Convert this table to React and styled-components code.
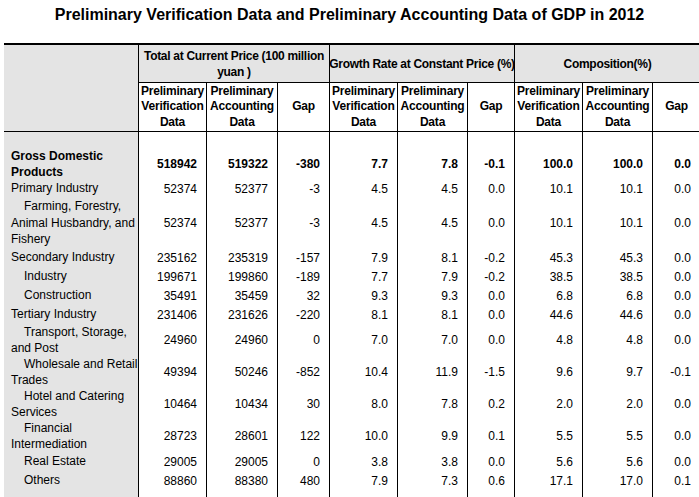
import React from 'react'
import styled, { createGlobalStyle } from 'styled-components'

const GlobalStyle = createGlobalStyle`
  html, body {
    margin: 0;
    padding: 0;
    background: #fff;
    overflow: hidden;
  }
  body {
    font-family: "Liberation Sans", Arial, sans-serif;
    color: #000;
  }
`

const Page = styled.div`
  width: 699px;
  height: 497px;
  overflow: hidden;
`

const Title = styled.h1`
  margin: 0;
  height: 43px;
  box-sizing: border-box;
  padding-top: 5px;
  font-size: 16px;
  line-height: 20px;
  font-weight: bold;
  text-align: center;
`

const Table = styled.div`
  margin-left: 4px;
  width: 696px;
  display: grid;
  grid-template-columns: 134px 68px 71px 52px 68px 70px 47px 68px 70px 48px;
  border-top: 2px solid #000;
  font-size: 12px;
`

const Corner = styled.div`
  grid-row: span 2;
  background: #e4e4e4;
  border-bottom: 1px solid #000;
`

const GroupHead = styled.div`
  grid-column: span 3;
  height: 38px;
  box-sizing: border-box;
  display: flex;
  align-items: center;
  justify-content: center;
  text-align: center;
  background: #e4e4e4;
  border-left: 1px solid #000;
  border-bottom: 1px solid #000;
  font-weight: bold;
  line-height: 16px;
  letter-spacing: -0.3px;
  white-space: nowrap;
`

const SubHead = styled.div`
  height: 49px;
  box-sizing: border-box;
  display: flex;
  align-items: center;
  justify-content: center;
  text-align: center;
  border-left: 1px solid #000;
  border-bottom: 1px solid #000;
  font-weight: bold;
  line-height: 15.5px;
  letter-spacing: -0.2px;
  white-space: nowrap;
`

const Label = styled.div`
  height: ${p => p.$h}px;
  box-sizing: border-box;
  display: flex;
  flex-direction: column;
  justify-content: center;
  padding-left: 7px;
  background: #e4e4e4;
  line-height: 16.5px;
  white-space: nowrap;
  font-weight: ${p => (p.$bold ? 'bold' : 'normal')};
`

const LabelLine = styled.span`
  padding-left: ${p => (p.$indent ? 13 : 0)}px;
`

const Num = styled.div`
  height: ${p => p.$h}px;
  box-sizing: border-box;
  display: flex;
  align-items: center;
  justify-content: flex-end;
  padding-right: 9px;
  border-left: 1px solid #000;
  font-weight: ${p => (p.$bold ? 'bold' : 'normal')};
`

const sub = [
  ['Preliminary', 'Verification', 'Data'],
  ['Preliminary', 'Accounting', 'Data'],
  ['Gap'],
]

const rows = [
  { label: [], h: 17, v: Array(9).fill('') },
  { label: ['Gross Domestic', 'Products'], bold: true, h: 30, v: ['518942', '519322', '-380', '7.7', '7.8', '-0.1', '100.0', '100.0', '0.0'] },
  { label: ['Primary Industry'], h: 19, v: ['52374', '52377', '-3', '4.5', '4.5', '0.0', '10.1', '10.1', '0.0'] },
  { label: ['Farming, Forestry,', 'Animal Husbandry, and', 'Fishery'], indent: true, h: 50, v: ['52374', '52377', '-3', '4.5', '4.5', '0.0', '10.1', '10.1', '0.0'] },
  { label: ['Secondary Industry'], h: 19, v: ['235162', '235319', '-157', '7.9', '8.1', '-0.2', '45.3', '45.3', '0.0'] },
  { label: ['Industry'], indent: true, h: 19, v: ['199671', '199860', '-189', '7.7', '7.9', '-0.2', '38.5', '38.5', '0.0'] },
  { label: ['Construction'], indent: true, h: 19, v: ['35491', '35459', '32', '9.3', '9.3', '0.0', '6.8', '6.8', '0.0'] },
  { label: ['Tertiary Industry'], h: 19, v: ['231406', '231626', '-220', '8.1', '8.1', '0.0', '44.6', '44.6', '0.0'] },
  { label: ['Transport, Storage,', 'and Post'], indent: true, h: 32, v: ['24960', '24960', '0', '7.0', '7.0', '0.0', '4.8', '4.8', '0.0'] },
  { label: ['Wholesale and Retail', 'Trades'], indent: true, h: 32, v: ['49394', '50246', '-852', '10.4', '11.9', '-1.5', '9.6', '9.7', '-0.1'] },
  { label: ['Hotel and Catering', 'Services'], indent: true, h: 32, v: ['10464', '10434', '30', '8.0', '7.8', '0.2', '2.0', '2.0', '0.0'] },
  { label: ['Financial', 'Intermediation'], indent: true, h: 32, v: ['28723', '28601', '122', '10.0', '9.9', '0.1', '5.5', '5.5', '0.0'] },
  { label: ['Real Estate'], indent: true, h: 19, v: ['29005', '29005', '0', '3.8', '3.8', '0.0', '5.6', '5.6', '0.0'] },
  { label: ['Others'], indent: true, h: 19, v: ['88860', '88380', '480', '7.9', '7.3', '0.6', '17.1', '17.0', '0.1'] },
  { label: [], h: 20, v: Array(9).fill('') },
]

const App = () => {
  return (
    <Page>
      <GlobalStyle />
      <Title>Preliminary Verification Data and Preliminary Accounting Data of GDP in 2012</Title>
      <Table>
        <Corner />
        <GroupHead>Total at Current Price (100 million<br />yuan )</GroupHead>
        <GroupHead>Growth Rate at Constant Price (%)</GroupHead>
        <GroupHead>Composition(%)</GroupHead>
        {[0, 1, 2].map(g =>
          sub.map((lines, i) => (
            <SubHead key={`${g}-${i}`}>
              <div>
                {lines.map((l, j) => (
                  <React.Fragment key={j}>{j > 0 && <br />}{l}</React.Fragment>
                ))}
              </div>
            </SubHead>
          ))
        )}
        {rows.map((r, i) => (
          <React.Fragment key={i}>
            <Label $h={r.h} $bold={r.bold}>
              {r.label.map((l, j) => (
                <LabelLine key={j} $indent={r.indent && j === 0}>{l}</LabelLine>
              ))}
            </Label>
            {r.v.map((v, j) => (
              <Num key={j} $h={r.h} $bold={r.bold}>{v}</Num>
            ))}
          </React.Fragment>
        ))}
      </Table>
    </Page>
  )
}

export default App
